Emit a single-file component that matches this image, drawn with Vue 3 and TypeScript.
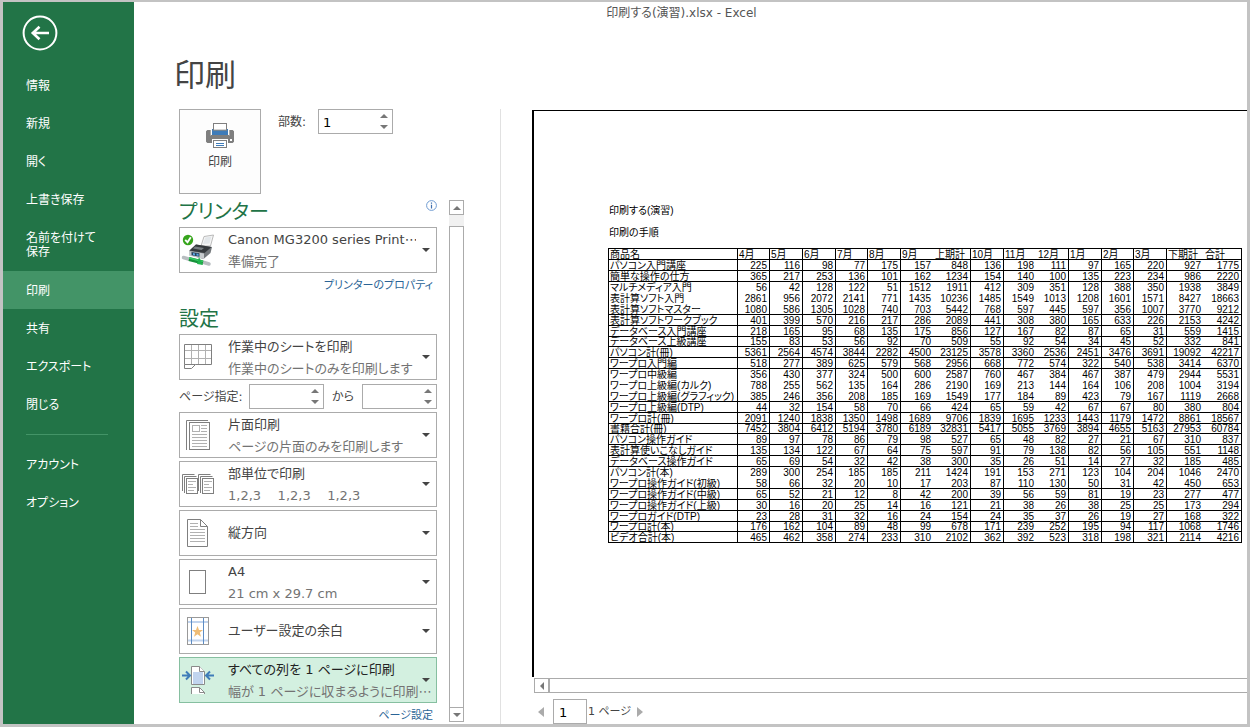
<script setup lang="ts">
import { ref } from 'vue'

interface NavItem {
  label: string
  current?: boolean
}

interface Setting {
  id: string
  name: string
  value: string
  note?: string
  active?: boolean
}

interface SheetRow {
  name: string
  values: number[]
  open?: boolean
  tight?: boolean
}

const primaryNav: NavItem[] = [
  { label: '情報' },
  { label: '新規' },
  { label: '開く' },
  { label: '上書き保存' },
  { label: '名前を付けて\n保存' },
  { label: '印刷', current: true },
  { label: '共有' },
  { label: 'エクスポート' },
  { label: '閉じる' },
]
const secondaryNav: NavItem[] = [{ label: 'アカウント' }, { label: 'オプション' }]

const settings: Setting[] = [
  { id: 'sides', name: '印刷面', value: '片面印刷', note: 'ページの片面のみを印刷します' },
  { id: 'collate', name: '部単位', value: '部単位で印刷', note: '1,2,3    1,2,3    1,2,3' },
  { id: 'orientation', name: '印刷の向き', value: '縦方向' },
  { id: 'paper', name: '用紙サイズ', value: 'A4', note: '21 cm x 29.7 cm' },
  { id: 'margins', name: '余白', value: 'ユーザー設定の余白' },
  { id: 'scaling', name: '拡大縮小', value: 'すべての列を 1 ページに印刷', note: '幅が 1 ページに収まるように印刷⋯', active: true },
]

const copies = ref('1')
const pageFrom = ref('')
const pageTo = ref('')
const currentPage = ref('1')

function step(value: string, by: number): string {
  return String(Math.max(1, (Number(value) || 0) + by))
}

const columns: string[] = [
  '商品名', '4月', '5月', '6月', '7月', '8月', '9月', '上期計',
  '10月', '11月', '12月', '1月', '2月', '3月', '下期計', '合計',
]

const rows: SheetRow[] = [
  { name: 'パソコン入門講座', values: [225, 116, 98, 77, 175, 157, 848, 136, 198, 111, 97, 165, 220, 927, 1775] },
  { name: '簡単な操作の仕方', values: [365, 217, 253, 136, 101, 162, 1234, 154, 140, 100, 135, 223, 234, 986, 2220] },
  { name: 'マルチメディア入門', values: [56, 42, 128, 122, 51, 1512, 1911, 412, 309, 351, 128, 388, 350, 1938, 3849], open: true },
  { name: '表計算ソフト入門', values: [2861, 956, 2072, 2141, 771, 1435, 10236, 1485, 1549, 1013, 1208, 1601, 1571, 8427, 18663], open: true },
  { name: '表計算ソフトマスター', values: [1080, 586, 1305, 1028, 740, 703, 5442, 768, 597, 445, 597, 356, 1007, 3770, 9212] },
  { name: '表計算ソフトワークブック', values: [401, 399, 570, 216, 217, 286, 2089, 441, 308, 380, 165, 633, 226, 2153, 4242] },
  { name: 'データベース入門講座', values: [218, 165, 95, 68, 135, 175, 856, 127, 167, 82, 87, 65, 31, 559, 1415] },
  { name: 'データベース上級講座', values: [155, 83, 53, 56, 92, 70, 509, 55, 92, 54, 34, 45, 52, 332, 841], tight: true },
  { name: 'パソコン計(冊)', values: [5361, 2564, 4574, 3844, 2282, 4500, 23125, 3578, 3360, 2536, 2451, 3476, 3691, 19092, 42217] },
  { name: 'ワープロ入門編', values: [518, 277, 389, 625, 579, 568, 2956, 668, 772, 574, 322, 540, 538, 3414, 6370] },
  { name: 'ワープロ中級編', values: [356, 430, 377, 324, 500, 600, 2587, 760, 467, 384, 467, 387, 479, 2944, 5531], open: true },
  { name: 'ワープロ上級編(カルク)', values: [788, 255, 562, 135, 164, 286, 2190, 169, 213, 144, 164, 106, 208, 1004, 3194], open: true },
  { name: 'ワープロ上級編(グラフィック)', values: [385, 246, 356, 208, 185, 169, 1549, 177, 184, 89, 423, 79, 167, 1119, 2668] },
  { name: 'ワープロ上級編(DTP)', values: [44, 32, 154, 58, 70, 66, 424, 65, 59, 42, 67, 67, 80, 380, 804] },
  { name: 'ワープロ計(冊)', values: [2091, 1240, 1838, 1350, 1498, 1689, 9706, 1839, 1695, 1233, 1443, 1179, 1472, 8861, 18567] },
  { name: '書籍合計(冊)', values: [7452, 3804, 6412, 5194, 3780, 6189, 32831, 5417, 5055, 3769, 3894, 4655, 5163, 27953, 60784], tight: true },
  { name: 'パソコン操作ガイド', values: [89, 97, 78, 86, 79, 98, 527, 65, 48, 82, 27, 21, 67, 310, 837] },
  { name: '表計算使いこなしガイド', values: [135, 134, 122, 67, 64, 75, 597, 91, 79, 138, 82, 56, 105, 551, 1148] },
  { name: 'データベース操作ガイド', values: [65, 69, 54, 32, 42, 38, 300, 35, 26, 51, 14, 27, 32, 185, 485] },
  { name: 'パソコン計(本)', values: [289, 300, 254, 185, 185, 211, 1424, 191, 153, 271, 123, 104, 204, 1046, 2470], open: true },
  { name: 'ワープロ操作ガイド(初級)', values: [58, 66, 32, 20, 10, 17, 203, 87, 110, 130, 50, 31, 42, 450, 653] },
  { name: 'ワープロ操作ガイド(中級)', values: [65, 52, 21, 12, 8, 42, 200, 39, 56, 59, 81, 19, 23, 277, 477] },
  { name: 'ワープロ操作ガイド(上級)', values: [30, 16, 20, 25, 14, 16, 121, 21, 38, 26, 38, 25, 25, 173, 294] },
  { name: 'ワープロガイド(DTP)', values: [23, 28, 31, 32, 16, 24, 154, 24, 35, 37, 26, 19, 27, 168, 322] },
  { name: 'ワープロ計(本)', values: [176, 162, 104, 89, 48, 99, 678, 171, 239, 252, 195, 94, 117, 1068, 1746], tight: true },
  { name: 'ビデオ合計(本)', values: [465, 462, 358, 274, 233, 310, 2102, 362, 392, 523, 318, 198, 321, 2114, 4216] },
]
</script>

<template>
  <div class="window">
    <aside class="sidebar">
      <button class="back" type="button" aria-label="戻る">
        <svg width="36" height="36" viewBox="0 0 36 36" fill="none" stroke="#fff">
          <circle cx="18" cy="18" r="16.4" stroke-width="2" />
          <path d="M10.5 18H27M17.5 11.8L10.8 18l6.7 6.2" stroke-width="2.6" />
        </svg>
      </button>
      <nav>
        <a v-for="item in primaryNav" :key="item.label" href="#" :class="{ current: item.current }">{{ item.label }}</a>
        <hr />
        <a v-for="item in secondaryNav" :key="item.label" href="#">{{ item.label }}</a>
      </nav>
    </aside>

    <main>
      <header class="titlebar">印刷する(演習).xlsx - Excel</header>
      <h1>印刷</h1>
      <div class="body">
        <section class="panel">
          <div class="top">
            <button class="print" type="button">
              <svg width="28" height="25" viewBox="0 0 84 75">
                <path d="M4 21h10v18h56V21h10l4 4v31l-4 4H4l-4-4V25z" fill="#7f7f7f" />
                <rect x="14" y="36" width="56" height="6" fill="#7f7f7f" />
                <rect x="18" y="18" width="48" height="18" fill="#3f7cb9" />
                <rect x="22.5" y="1.5" width="39" height="20" fill="#fff" stroke="#7f7f7f" stroke-width="3" />
                <rect x="18" y="48" width="48" height="27" fill="#fff" />
                <rect x="22.5" y="52.5" width="39" height="21" fill="#fff" stroke="#7f7f7f" stroke-width="3" />
                <path d="M30 61.5h24M30 67.5h24" stroke="#3f7cb9" stroke-width="3" />
                <rect x="72" y="48" width="6" height="6" fill="#fff" />
              </svg>
              <span>印刷</span>
            </button>
            <label for="copies">部数:</label>
            <div class="spin">
              <input id="copies" v-model="copies" type="text" inputmode="numeric" />
              <div class="steps">
                <button type="button" aria-label="部数を増やす" @click="copies = step(copies, 1)"><i class="tri up"></i></button>
                <button type="button" aria-label="部数を減らす" @click="copies = step(copies, -1)"><i class="tri down"></i></button>
              </div>
            </div>
          </div>

          <div class="scroller">
            <div class="list">
              <div class="heading">
                <h2>プリンター</h2>
                <svg class="info" width="11" height="11" viewBox="0 0 11 11">
                  <circle cx="5.5" cy="5.5" r="4.9" fill="#fff" stroke="#6f9bd1" />
                  <path d="M5.5 2.5v1.2M5.5 4.8v3.7" stroke="#3f6fae" stroke-width="1.2" />
                </svg>
              </div>

              <div class="combo two">
                <svg width="34" height="34" viewBox="0 0 34 34">
                  <path d="M20 13l3-9.5 9.5-1.5-3 11z" fill="#f6f6f6" stroke="#aaa" stroke-width=".8" />
                  <path d="M22 11l2.4-6.5 6-1-2 7z" fill="#e3e7ea" />
                  <path d="M8 18l7-6.5 16 2.5-1.500 6-7 6L8 22z" fill="#74787c" />
                  <path d="M8.500 17.500l6.500-6 15.500 2.500-7 6z" fill="#35393d" />
                  <path d="M14 13.500l9 1.500-2.500 2-8.500-1.500z" fill="#777d82" />
                  <path d="M8 18l15 2.500v5.500L8 22.500z" fill="#c7cbce" />
                  <path d="M10.500 19l8 1.300v3.500l-8-1.500z" fill="#27435f" />
                  <path d="M12 20l2 .4v2l-2-.4zM15.500 20.500l2 .4v2l-2-.4z" fill="#5ba5e0" />
                  <path d="M2.500 24.500l5 1.500M23 29.500l5 1.500" stroke="#b7bdc0" stroke-width="3.500" stroke-linecap="round" />
                  <path d="M8 26l14 3.500" stroke="#17913b" stroke-width="4" />
                  <path d="M8 25l14 3.500" stroke="#35cb62" stroke-width="1.500" />
                  <path d="M18 24l4 8-6-1z" fill="#21b34d" />
                  <circle cx="7" cy="7" r="5.200" fill="#37a51d" />
                  <path d="M4.200 6.800L6.500 9.300 9.800 4.300" fill="none" stroke="#fff" stroke-width="1.900" />
                </svg>
                <select aria-label="プリンター"><option>Canon MG3200 series Print⋯</option></select>
                <span class="note">準備完了</span>
                <i class="tri down dark"></i>
              </div>
              <a class="link" href="#">プリンターのプロパティ</a>

              <h2 class="second">設定</h2>
              <div class="combo two">
                <svg width="34" height="34" viewBox="0 0 34 34" fill="none">
                  <path d="M10.500 4v21M17.500 4v21M24.500 4v21M3 10.500h28M3 18.500h28" stroke="#b1b1b1" />
                  <path d="M3.500 24.500v-20h27v20h-16l-4 4h-7v-4h11" stroke="#7f7f7f" />
                </svg>
                <select aria-label="印刷対象"><option>作業中のシートを印刷</option></select>
                <span class="note">作業中のシートのみを印刷します</span>
                <i class="tri down dark"></i>
              </div>

              <div class="pages">
                <label for="from">ページ指定:</label>
                <div class="spin">
                  <input id="from" v-model="pageFrom" type="text" inputmode="numeric" />
                  <div class="steps">
                    <button type="button" aria-label="開始ページを増やす" @click="pageFrom = step(pageFrom, 1)"><i class="tri up"></i></button>
                    <button type="button" aria-label="開始ページを減らす" @click="pageFrom = step(pageFrom, -1)"><i class="tri down"></i></button>
                  </div>
                </div>
                <label for="to">から</label>
                <div class="spin">
                  <input id="to" v-model="pageTo" type="text" inputmode="numeric" />
                  <div class="steps">
                    <button type="button" aria-label="終了ページを増やす" @click="pageTo = step(pageTo, 1)"><i class="tri up"></i></button>
                    <button type="button" aria-label="終了ページを減らす" @click="pageTo = step(pageTo, -1)"><i class="tri down"></i></button>
                  </div>
                </div>
              </div>

              <div class="stack">
                <div v-for="s in settings" :key="s.id" class="combo" :class="{ two: s.note, active: s.active }">
                  <svg width="34" height="34" viewBox="0 0 34 34" fill="none">
                    <template v-if="s.id === 'sides'">
                      <path d="M5.500 32V2.500H27" stroke="#7f7f7f" />
                      <rect x="8.500" y="4.500" width="20" height="27" stroke="#7f7f7f" />
                      <rect x="11.500" y="7.500" width="7" height="6" stroke="#b1b1b1" />
                      <path d="M20 7.500h6M20 10.500h6M20 13.500h6M11 16.500h15M11 19.500h15M11 22.500h15M11 25.500h15M11 28.500h15" stroke="#b1b1b1" />
                    </template>
                    <template v-else-if="s.id === 'collate'">
                      <path d="M1.500 24V7.500h12M3.500 26V9.500h12M17.500 24V7.500h12M19.500 26V9.500h12" stroke="#7f7f7f" />
                      <rect x="5.500" y="11.500" width="11" height="15" fill="#fff" stroke="#7f7f7f" />
                      <rect x="21.500" y="11.500" width="11" height="15" fill="#fff" stroke="#7f7f7f" />
                      <path d="M7 14.500h8M7 17.500h5M7 20.500h8M7 23.500h6M23 14.500h8M23 17.500h5M23 20.500h8M23 23.500h6" stroke="#b1b1b1" />
                    </template>
                    <template v-else-if="s.id === 'orientation'">
                      <path d="M6.500 3.500h13l7 7v20h-20zM19.500 3.500v7h7" stroke="#7f7f7f" />
                      <path d="M9 7.500h8M9 10.500h8M9 13.500h15M9 16.500h15M9 19.500h15M9 22.500h15M9 25.500h15" stroke="#b1b1b1" />
                    </template>
                    <rect v-else-if="s.id === 'paper'" x="8.500" y="5.500" width="16" height="23" stroke="#7f7f7f" />
                    <template v-else-if="s.id === 'margins'">
                      <rect x="6.500" y="3.500" width="21" height="27" stroke="#999" />
                      <path d="M7 8h20M7 26.500h20" stroke="#c1d4ee" stroke-width="2" />
                      <path d="M10.500 4v26M22.500 4v26" stroke="#5c8cc4" />
                      <path d="M16.500 12l1.500 4h4l-3.200 2.500 1.200 4.300-3.500-2.600-3.500 2.600 1.200-4.300L11 16h4z" fill="#efbd76" />
                    </template>
                    <template v-else>
                      <path d="M10.500 3.500h8l5 5v13h-13z" fill="#fff" stroke="#8a8a8a" />
                      <rect x="12" y="9" width="10" height="12" fill="#c1d4ee" />
                      <path d="M18.500 3.500v5h5" fill="#fff" stroke="#8a8a8a" />
                      <path d="M10.500 31v-6.500h8l5 5V31" fill="#fff" stroke="#8a8a8a" />
                      <path d="M18.500 24.500v5h5" stroke="#8a8a8a" />
                      <path d="M1 12.500h7M5 8.500l4 4-4 4M33 12.500h-7M29 8.500l-4 4 4 4" stroke="#3f7cb9" stroke-width="2" />
                    </template>
                  </svg>
                  <select :aria-label="s.name"><option>{{ s.value }}</option></select>
                  <span v-if="s.note" class="note">{{ s.note }}</span>
                  <i class="tri down dark"></i>
                </div>
              </div>
              <a class="link last" href="#">ページ設定</a>
            </div>

            <div class="vbar">
              <button type="button" aria-label="上へ"><i class="tri up"></i></button>
              <div class="gap"></div>
              <div class="thumb"></div>
              <button type="button" aria-label="下へ"><i class="tri down"></i></button>
            </div>
          </div>
        </section>

        <section class="preview">
          <div class="paper">
            <p>印刷する(演習)</p>
            <p>印刷の手順</p>
            <table>
              <colgroup><col v-for="(c, i) in columns" :key="c" :class="'c' + i" /></colgroup>
              <thead>
                <tr><th v-for="c in columns" :key="c" scope="col">{{ c }}</th></tr>
              </thead>
              <tbody>
                <tr v-for="(r, i) in rows" :key="i" :class="{ open: r.open, tight: r.tight }">
                  <th scope="row">{{ r.name }}</th>
                  <td v-for="(v, j) in r.values" :key="j">{{ v }}</td>
                </tr>
              </tbody>
            </table>
          </div>
          <div class="hbar">
            <button type="button" aria-label="左へ"><i class="tri left"></i></button>
            <div class="thumb"></div>
          </div>
          <div class="pager">
            <button type="button" aria-label="前のページ"><i class="tri left big"></i></button>
            <input v-model="currentPage" type="text" aria-label="現在のページ" />
            <span>1 ページ</span>
            <button type="button" aria-label="次のページ"><i class="tri right big"></i></button>
          </div>
        </section>
      </div>
    </main>
  </div>
</template>

<style>
body {
  margin: 0;
  background: #fff;
}
</style>

<style scoped>
.window {
  display: flex;
  box-sizing: border-box;
  height: 100vh;
  margin-right: 1px;
  border: 3px solid #c3c3c3;
  border-top-width: 2px;
  background: #fff;
  color: #444;
  font: 13px/20px "DejaVu Sans", "Noto Sans CJK JP", sans-serif;
  font-feature-settings: "palt";
  overflow: hidden;
}
button, input, select {
  box-sizing: border-box;
  margin: 0;
  padding: 0;
  border: 0;
  border-radius: 0;
  background: none;
  color: inherit;
  font: inherit;
  font-feature-settings: inherit;
}
button {
  display: flex;
  align-items: center;
  justify-content: center;
}
a {
  text-decoration: none;
}
h1, h2, p {
  margin: 0;
  font-weight: 400;
}

.sidebar {
  flex: none;
  width: 131px;
  background: #227447;
}
.back {
  margin: 13px 0 15px 19px;
}
nav a {
  display: block;
  padding: 13px 0 11px 23px;
  color: #fff;
  font-size: 12px;
  line-height: 14px;
  white-space: pre-line;
}
nav a:nth-of-type(5) {
  padding-bottom: 12px;
}
nav a.current {
  background: #439467;
}
nav hr {
  width: 82px;
  height: 1px;
  margin: 11px 0 10px 23px;
  border: 0;
  background: #439467;
}

main {
  display: flex;
  flex: 1;
  flex-direction: column;
  min-width: 0;
}
.titlebar {
  height: 22px;
  padding-right: 18px;
  color: #555;
  font-size: 12px;
  line-height: 22px;
  text-align: center;
}
h1 {
  padding: 31px 0 14px 40px;
  font-size: 31px;
  line-height: 40px;
}
.body {
  display: flex;
  flex: 1;
  min-height: 0;
}
.panel {
  display: flex;
  flex: none;
  flex-direction: column;
  width: 321px;
  padding-left: 45px;
  border-right: 1px solid #e1e1e1;
}
.top {
  display: flex;
  align-items: flex-start;
  height: 85px;
}
.top label {
  width: 40px;
  margin-left: 17px;
  font-size: 12px;
  line-height: 26px;
}
.print {
  flex-direction: column;
  gap: 4px;
  width: 82px;
  height: 85px;
  padding-bottom: 8px;
  border: 1px solid #ababab;
  background: #fdfdfd;
  font-size: 12px;
}
.spin {
  display: flex;
  box-sizing: border-box;
  width: 75px;
  height: 25px;
  border: 1px solid #ababab;
}
.spin input {
  flex: 1;
  min-width: 0;
  padding: 2px 0 0 4px;
  color: #000;
}
.steps {
  display: flex;
  flex-direction: column;
  width: 16px;
}
.steps button {
  flex: 1;
}
.tri {
  flex: none;
  border: 4px solid transparent;
}
.up {
  border-top: 0;
  border-bottom-color: #777;
}
.down {
  border-bottom: 0;
  border-top-color: #777;
}
.left {
  border-left: 0;
  border-right-color: #777;
}
.right {
  border-right: 0;
  border-left-color: #777;
}
.left.big {
  border-width: 5px 6px 5px 0;
  border-right-color: #ababab;
}
.right.big {
  border-width: 5px 0 5px 6px;
  border-left-color: #ababab;
}
.down.dark {
  border-top-color: #444;
}

.scroller {
  display: flex;
  flex: 1;
  gap: 12px;
  min-height: 0;
  margin: 6px 0 2px;
}
.list {
  width: 258px;
}
.heading {
  display: flex;
  justify-content: space-between;
  height: 27px;
}
h2 {
  color: #217346;
  font-size: 20px;
  line-height: 24px;
}
h2.second {
  padding: 6px 0 0;
  line-height: 30px;
}
.combo {
  display: flex;
  position: relative;
  align-items: center;
  box-sizing: border-box;
  height: 46px;
  padding: 0 6px 0 1px;
  border: 1px solid #ababab;
}
.combo svg {
  flex: none;
}
.combo select {
  position: absolute;
  inset: 0;
  width: 100%;
  padding: 0 20px 0 48px;
  appearance: none;
  text-overflow: clip;
}
.combo.two select {
  padding-bottom: 20px;
}
.combo .note {
  width: 0;
  margin: 24px 0 0 13px;
  color: #737373;
  white-space: pre;
}
.combo .tri {
  margin-left: auto;
}
.combo.active {
  border-color: #86bfa0;
  background: #d3f0e0;
  color: #222;
}
.link {
  display: block;
  height: 25px;
  padding-right: 4px;
  color: #2a6496;
  font-size: 11px;
  line-height: 26px;
  text-align: right;
}
.link.last {
  height: 19px;
}
.pages {
  display: flex;
  align-items: center;
  justify-content: space-between;
  padding: 4px 0 3px;
  font-size: 12px;
}
.pages label:first-child {
  width: 62px;
  white-space: nowrap;
}
.stack {
  display: flex;
  flex-direction: column;
  gap: 3px;
}
.vbar {
  display: flex;
  flex-direction: column;
  width: 15px;
}
.vbar button {
  height: 15px;
  border: 1px solid #ababab;
}
.vbar .gap {
  height: 11px;
  background: #f1f1f1;
}
.vbar .thumb {
  flex: 1;
  border: 1px solid #ababab;
  border-bottom: 0;
}

.preview {
  display: flex;
  flex: 1;
  flex-direction: column;
  min-width: 0;
  padding: 1px 0 0 31px;
}
.paper {
  flex: 1;
  min-height: 0;
  padding: 89px 0 0 74px;
  border-top: 1px solid #000;
  border-left: 2px solid #000;
  color: #000;
  font-family: "Liberation Sans", "Noto Sans CJK JP", sans-serif;
  font-size: 10px;
  overflow: hidden;
}
.paper p {
  padding-left: 1px;
  line-height: 22px;
}
table {
  width: 634px;
  margin-top: 4px;
  border: solid #000;
  border-width: 1px 0 0 1px;
  border-spacing: 0;
  table-layout: fixed;
}
th, td {
  box-sizing: border-box;
  height: 11px;
  padding: 0 1px;
  border: solid #000;
  border-width: 0 1px 1px 0;
  font-weight: 400;
  line-height: 9px;
  text-align: left;
  white-space: nowrap;
}
td {
  padding-right: 2px;
  text-align: right;
}
.tight > * {
  height: 10px;
}
.open > * {
  padding-bottom: 1px;
  border-bottom: 0;
}
th:nth-child(7), td:nth-child(7),
th:nth-child(10), td:nth-child(10),
th:nth-child(15), td:nth-child(15) {
  border-right: 0;
  padding-right: 3px;
}
.c0 { width: 129px; }
.c1, .c4, .c10, .c12 { width: 32px; }
.c2, .c3, .c5, .c6, .c8, .c9, .c11, .c13 { width: 33px; }
.c7, .c14 { width: 37px; }
.c15 { width: 38px; }
.hbar {
  display: flex;
  flex: none;
  height: 15px;
  margin: 1px 0 0 2px;
}
.hbar button {
  width: 15px;
  border: 1px solid #ababab;
}
.hbar .thumb {
  flex: 1;
  border: 1px solid #ababab;
  border-width: 1px 0 1px 1px;
}
.pager {
  display: flex;
  flex: none;
  align-items: center;
  height: 25px;
  margin: 6px 0 0 6px;
}
.pager input {
  width: 34px;
  height: 25px;
  margin: 0 1px 0 9px;
  padding: 2px 0 0 5px;
  border: 1px solid #ababab;
  color: #000;
}
.pager span {
  margin-right: 6px;
  font-size: 11px;
  white-space: nowrap;
}
</style>
